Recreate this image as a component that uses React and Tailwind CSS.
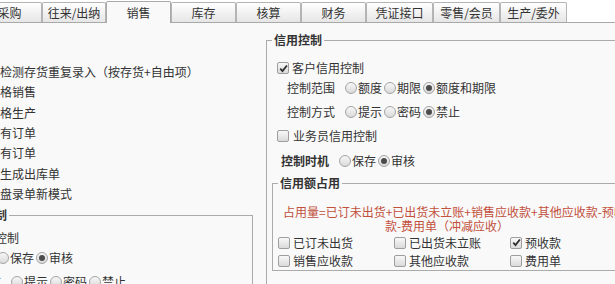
import React from 'react';

// 单选框（灰色渐变圆圈）
const Radio = ({checked = false}) => (
    <span className="inline-flex items-center justify-center shrink-0 w-[12px] h-[12px] rounded-full border border-[#a4a4a4] bg-linear-to-b from-[#f7f7f7] to-[#dadada]">
        {checked && <span className="w-[6px] h-[6px] rounded-full bg-[#4b4b4b]"/>}
    </span>
);

// 复选框
const Check = ({checked = false}) => (
    <span className="inline-flex items-center justify-center shrink-0 w-[12px] h-[12px] rounded-[2px] border border-[#9e9e9e] bg-linear-to-b from-[#f8f8f8] to-[#dadada]">
        {checked && (
            <svg width="9" height="9" viewBox="0 0 10 10">
                <path d="M1.4 5.2 L3.9 7.9 L8.8 1.6" fill="none" stroke="#2e2e2e" strokeWidth="2"/>
            </svg>
        )}
    </span>
);

const RadioGroup = ({items, value}) => (
    <div className="flex items-center gap-[2px]">
        {items.map(item => (
            <span key={item} className="flex items-center">
                <Radio checked={item === value}/>
                <span className="ml-[1px]">{item}</span>
            </span>
        ))}
    </div>
);

const CheckItem = ({label, checked}) => (
    <div className="w-[116px] flex items-center">
        <Check checked={checked}/>
        <span className="ml-[3px]">{label}</span>
    </div>
);

const tabs = [
    ['采购', 'w-[65px]'],
    ['往来/出纳', 'w-[64px]'],
    ['销售', 'w-[65px]'],
    ['库存', 'w-[65px]'],
    ['核算', 'w-[65px]'],
    ['财务', 'w-[65px]'],
    ['凭证接口', 'w-[67px]'],
    ['零售/会员', 'w-[67px]'],
    ['生产/委外', 'w-[67px]'],
];

const leftLines = ['检测存货重复录入（按存货+自由项）', '格销售', '格生产', '有订单', '有订单', '生成出库单', '盘录单新模式'];

export default function App() {
    return (
        <div className="w-[615px] h-[284px] overflow-hidden bg-[#f9f9f9] text-[12px] text-[#333] font-['Noto_Sans_CJK_SC',sans-serif]">
            {/* 页签 */}
            <div className="flex items-end h-[23px] ml-[-23px] border-b border-[#a9a9a9] bg-white">
                {tabs.map(([name, w]) => name === '销售' ? (
                    <div key={name} className={`${w} h-[22px] mb-[-1px] relative flex items-center justify-center bg-[#f9f9f9] border border-b-0 border-[#a9a9a9] rounded-t-[2px] leading-none`}>
                        {name}
                    </div>
                ) : (
                    <div key={name} className={`${w} h-[20px] flex items-center justify-center bg-linear-to-b from-[#ffffff] to-[#e6e6e6] border border-b-0 border-[#b4b4b4] rounded-t-[2px] leading-none`}>
                        {name}
                    </div>
                ))}
            </div>

            <div className="flex">
                {/* 左侧 */}
                <div className="w-[266px] shrink-0 overflow-hidden pt-[39px]">
                    {leftLines.map((t, i) => (
                        <div key={i} className="leading-[20.33px] whitespace-nowrap">{t}</div>
                    ))}
                    <fieldset className="mt-[3px] ml-[-20px] w-[273px] border border-[#ababab] pb-2">
                        <legend className="ml-0 px-[2px] leading-[16px] font-bold">控制</legend>
                        <div className="mt-[5px] h-5 flex items-center ml-[-10px] whitespace-nowrap">信用控制</div>
                        <div className="h-5 flex items-center ml-[-42px] whitespace-nowrap">
                            <span className="font-bold mr-[10px]">控制时机</span>
                            <RadioGroup items={['保存', '审核']} value="审核"/>
                        </div>
                        <div className="mt-[4px] h-5 flex items-center ml-[-28px] whitespace-nowrap">
                            <span className="mr-[10px]">控制方式</span>
                            <RadioGroup items={['提示', '密码', '禁止']} value=""/>
                        </div>
                    </fieldset>
                </div>

                {/* 信用控制 */}
                <fieldset className="mt-[9px] w-[400px] shrink-0 border border-[#ababab] pb-[8px]">
                    <legend className="ml-[5px] px-[2px] leading-[16px] font-bold">信用控制</legend>

                    <div className="mt-[10px] h-5 flex items-center pl-[10px]">
                        <Check checked/>
                        <span className="ml-[3px]">客户信用控制</span>
                    </div>
                    <div className="h-5 flex items-center pl-[20px]">
                        <span className="mr-[10px]">控制范围</span>
                        <RadioGroup items={['额度', '期限', '额度和期限']} value="额度和期限"/>
                    </div>
                    <div className="mt-[4px] h-5 flex items-center pl-[20px]">
                        <span className="mr-[10px]">控制方式</span>
                        <RadioGroup items={['提示', '密码', '禁止']} value="禁止"/>
                    </div>
                    <div className="mt-[4px] h-5 flex items-center pl-[10px]">
                        <Check/>
                        <span className="ml-[4px]">业务员信用控制</span>
                    </div>
                    <div className="mt-[5px] h-5 flex items-center pl-[14px]">
                        <span className="font-bold mr-[10px]">控制时机</span>
                        <RadioGroup items={['保存', '审核']} value="审核"/>
                    </div>

                    {/* 信用额占用 */}
                    <fieldset className="mt-[4px] ml-[5px] w-[380px] border border-[#ababab]">
                        <legend className="ml-[5px] px-[2px] leading-[16px] font-bold">信用额占用</legend>
                        <div className="mt-[14px] text-[#c2503c] leading-[14px]">
                            <div className="pl-[10px] whitespace-nowrap">占用量=已订未出货+已出货未立账+销售应收款+其他应收款-预收</div>
                            <div className="ml-[10px] w-[328px] text-center whitespace-nowrap">款-费用单（冲减应收）</div>
                        </div>
                        <div className="pl-[5px]">
                            <div className="h-[19px] flex items-center">
                                <CheckItem label="已订未出货"/>
                                <CheckItem label="已出货未立账"/>
                                <CheckItem label="预收款" checked/>
                            </div>
                            <div className="h-[18px] flex items-center">
                                <CheckItem label="销售应收款"/>
                                <CheckItem label="其他应收款"/>
                                <CheckItem label="费用单"/>
                            </div>
                        </div>
                    </fieldset>
                </fieldset>
            </div>
        </div>
    );
}
